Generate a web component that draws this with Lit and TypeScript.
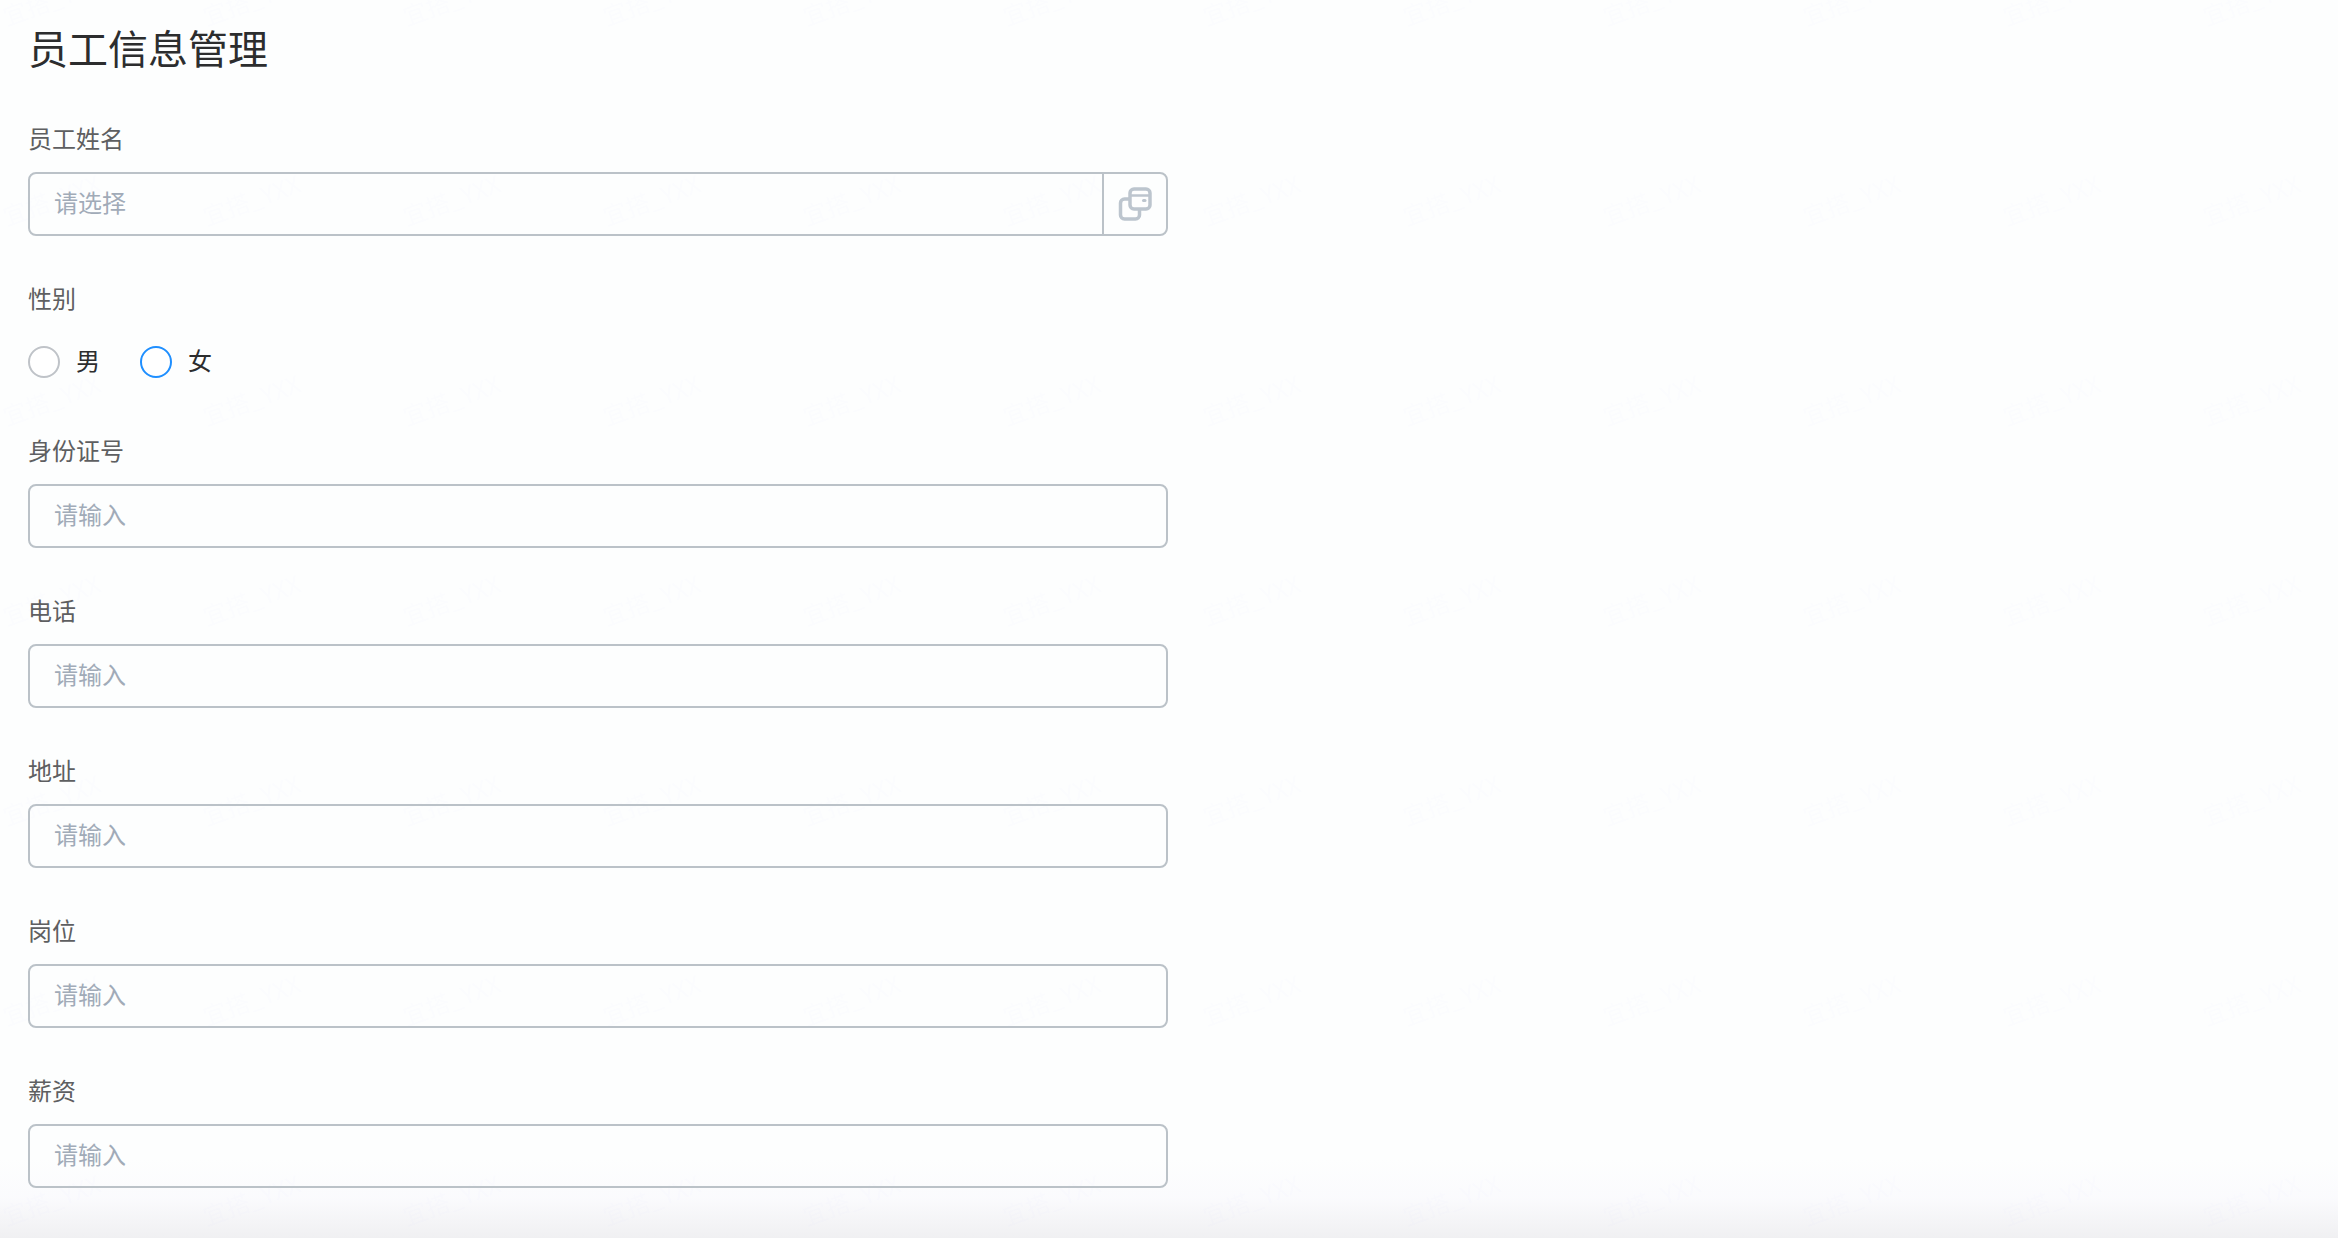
import { LitElement, html, css, svg } from "lit";
import { customElement, state } from "lit/decorators.js";

interface TextField {
  id: string;
  label: string;
}

const TEXT_FIELDS: TextField[] = [
  { id: "id-number", label: "身份证号" },
  { id: "phone", label: "电话" },
  { id: "address", label: "地址" },
  { id: "position", label: "岗位" },
  { id: "salary", label: "薪资" },
];

const GENDERS = [
  { value: "male", label: "男" },
  { value: "female", label: "女" },
];

@customElement("app-root")
export class AppRoot extends LitElement {
  static styles = css`
    :host {
      display: block;
      font-family: "Noto Sans CJK SC", "Noto Sans", sans-serif;
      color: #2c2d2e;
    }
    * {
      box-sizing: border-box;
    }
    .page {
      position: relative;
      min-height: 100vh;
      padding: 19px 28px 50px;
      background: #fdfefe;
    }
    .shade {
      position: absolute;
      inset: auto 0 0 0;
      height: 80px;
      background: linear-gradient(rgba(249, 249, 252, 0), rgba(250, 250, 253, 0.8) 50%, #f0f0f2);
      pointer-events: none;
    }
    .watermark {
      position: absolute;
      inset: 0;
      width: 100%;
      height: 100%;
      pointer-events: none;
    }
    .mark {
      fill: #6482ff;
      fill-opacity: 0.01;
      font-size: 24px;
    }
    .content {
      position: relative;
    }
    .title {
      margin: 0 0 46px;
      font-size: 40px;
      line-height: 56px;
      font-weight: 400;
    }
    .columns {
      display: grid;
      grid-template-columns: 1fr 1fr;
      gap: 2px;
    }
    .form {
      display: flex;
      flex-direction: column;
      gap: 45px;
      min-width: 0;
    }
    .field {
      display: flex;
      flex-direction: column;
      gap: 17px;
      min-width: 0;
    }
    .label {
      font-size: 24px;
      line-height: 34px;
      color: #5e5f61;
    }
    .box {
      display: flex;
      height: 64px;
      border: 2px solid #bbc2c8;
      border-radius: 8px;
      overflow: hidden;
    }
    .box:focus-within {
      border-color: #1a8cff;
    }
    .input {
      flex: 1;
      min-width: 0;
      padding: 0 24px 6px;
      border: 0;
      outline: 0;
      background: transparent;
      font: inherit;
      font-size: 24px;
      color: inherit;
    }
    .input::placeholder {
      color: #a1abb8;
      opacity: 1;
    }
    .picker {
      display: flex;
      align-items: center;
      justify-content: center;
      width: 64px;
      padding: 0;
      border: 0;
      border-left: 2px solid #bbc2c8;
      background: transparent;
      color: #bcc5ce;
      cursor: pointer;
    }
    .radios {
      display: flex;
      align-items: center;
      gap: 40px;
      height: 56px;
      padding-top: 4px;
    }
    .option {
      display: flex;
      align-items: center;
      gap: 16px;
      font-size: 24px;
      line-height: 34px;
      cursor: pointer;
    }
    .caption {
      padding-bottom: 4px;
    }
    .radio {
      appearance: none;
      width: 32px;
      height: 32px;
      margin: 0;
      border: 2px solid #bfc3c8;
      border-radius: 50%;
      outline: 0;
      background: #ffffff;
      cursor: pointer;
    }
    .radio.active {
      border-color: #1f8fff;
    }
    .radio:checked {
      border: 10px solid #1f8fff;
    }
  `;

  @state() private hovered = "female";

  private pickerIcon() {
    return svg`<svg width="34" height="34" viewBox="0 0 34 34" fill="none" stroke="currentColor" stroke-width="3.500" aria-hidden="true">
      <path d="M12 12H6.500a4 4 0 0 0-4 4v12a4 4 0 0 0 4 4h11a4 4 0 0 0 4-4V22" />
      <rect x="12" y="2" width="20" height="20" rx="4" />
      <path d="M12 8.500H32" stroke-width="2.500" />
      <path d="M25.500 13.500H27" stroke-width="3" stroke-linecap="round" />
    </svg>`;
  }

  private textField(field: TextField) {
    return html`<div class="field">
      <label class="label" for=${field.id}>${field.label}</label>
      <div class="box"><input class="input" id=${field.id} type="text" placeholder="请输入" /></div>
    </div>`;
  }

  render() {
    return html`<main class="page">
      <div class="shade"></div>
      <svg class="watermark" aria-hidden="true">
        <defs>
          <pattern id="mark" width="200" height="200" patternUnits="userSpaceOnUse">
            <text class="mark" x="7" y="226" transform="rotate(-20 7 226)">宜搭_YXX</text>
            <text class="mark" x="7" y="26" transform="rotate(-20 7 26)">宜搭_YXX</text>
          </pattern>
        </defs>
        <rect width="100%" height="100%" fill="url(#mark)" />
      </svg>
      <div class="content">
        <h1 class="title">员工信息管理</h1>
        <div class="columns">
          <form class="form">
            <div class="field">
              <label class="label" for="name">员工姓名</label>
              <div class="box">
                <input class="input" id="name" type="text" placeholder="请选择" />
                <button class="picker" type="button" aria-label="选择">${this.pickerIcon()}</button>
              </div>
            </div>
            <div class="field" role="radiogroup" aria-labelledby="gender">
              <span class="label" id="gender">性别</span>
              <div class="radios">
                ${GENDERS.map(
                  (g) => html`<label class="option" @mouseenter=${() => (this.hovered = g.value)}>
                    <input class="radio ${this.hovered === g.value ? "active" : ""}" type="radio" name="gender" value=${g.value} />
                    <span class="caption">${g.label}</span>
                  </label>`,
                )}
              </div>
            </div>
            ${TEXT_FIELDS.map((f) => this.textField(f))}
          </form>
        </div>
      </div>
    </main>`;
  }
}
